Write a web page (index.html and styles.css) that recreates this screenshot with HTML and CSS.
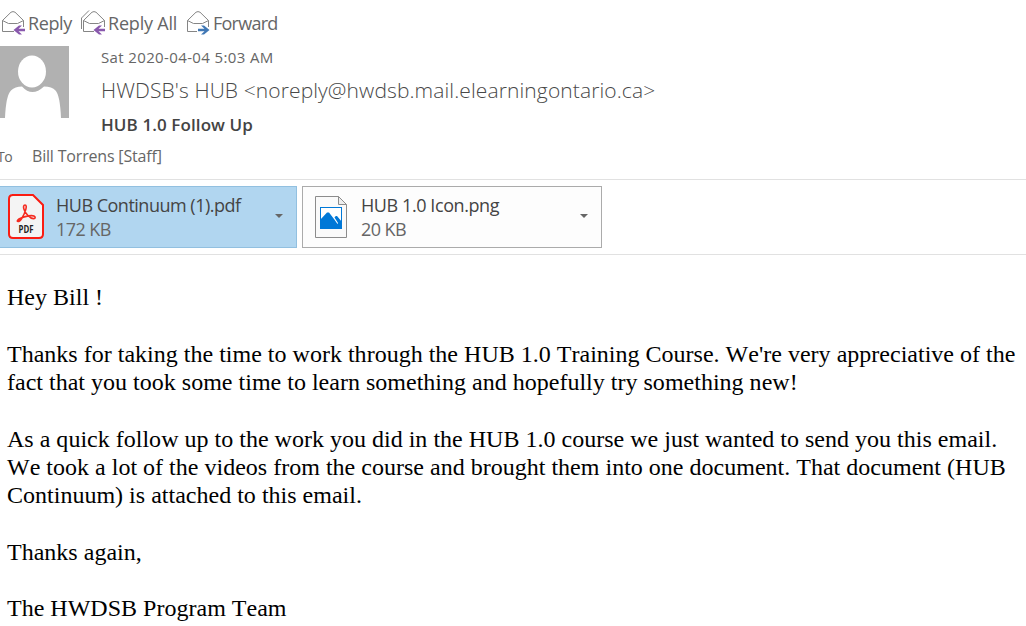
FILE: index.html
```html
<!DOCTYPE html>
<html lang="en">

<head>
    <meta charset="UTF-8">
    <meta name="viewport" content="width=device-width, initial-scale=1.0">
    <title>HUB 1.0 Follow Up</title>
    <link rel="stylesheet" href="styles.css">
</head>

<body>
    <nav class="actions">
        <a class="action reply">
            <svg width="24" height="24" viewBox="0 0 24 24">
                <path class="envelope" d="M12 20.500H.5V9.500L9 1.200Q11 0 13 1.200L21.500 9.500V16M.5 9.500L6.500 12.500H15.500L21.500 9.500" />
                <path class="arrow" d="M11.500 19L17 14.500H20L16.500 17.800H23V20.200H16.500L20 23.500H17Z" />
            </svg>
            <span>Reply</span>
        </a>
        <a class="action reply-all">
            <svg width="26" height="24" viewBox="0 0 26 24">
                <path class="envelope" d="M13 20.500H2.500V9.500L11 1.200Q13 0 15 1.200L23.500 9.500V16M2.500 9.500L8.500 12.500H17.500L23.500 9.500M.5 18V7L8 -.5" />
                <path class="arrow" d="M12.500 19L18 14.500H21L17.500 17.800H24V20.200H17.500L21 23.500H18Z" />
            </svg>
            <span>Reply All</span>
        </a>
        <a class="action forward">
            <svg width="24" height="24" viewBox="0 0 24 24">
                <path class="envelope" d="M10 20.500H.5V9.500L9 1.200Q11 0 13 1.200L21.500 9.500V16M.5 9.500L6.500 12.500H15.500L21.500 9.500" />
                <path class="arrow" d="M22.500 19L17 14.500H14L17.500 17.800H11V20.200H17.500L14 23.500H17Z" />
            </svg>
            <span>Forward</span>
        </a>
    </nav>

    <header class="message-header">
        <svg class="avatar" width="69" height="72" viewBox="0 0 69 72">
            <rect width="69" height="72" fill="#b1b1b1" />
            <path fill="#fff" d="M5 72Q6 49 11 44.500Q15 40.500 22 40.500Q27 46 32.500 46Q38 46 44 40.500Q52 40.500 55.500 44.500Q60 49 61 72Z" />
            <ellipse cx="32" cy="25.500" rx="14" ry="16" fill="#fff" />
        </svg>
        <div class="details">
            <div class="date">Sat 2020-04-04 5:03 AM</div>
            <div class="sender">HWDSB's HUB &lt;noreply@hwdsb.mail.elearningontario.ca&gt;</div>
            <div class="subject">HUB 1.0 Follow Up</div>
        </div>
    </header>

    <div class="recipients">
        <span class="to">To</span>
        <span class="name">Bill Torrens [Staff]</span>
    </div>

    <section class="attachments">
        <div class="attachment selected">
            <svg class="file-icon" width="36" height="46" viewBox="0 0 36 46">
                <path fill="#f4f4f4" stroke="#fa1c12" stroke-width="2" d="M4 1H25L35 11V40Q35 44 31 44H5Q1 44 1 40V5Q1 1 5 1Z" />
                <path fill="none" stroke="#f52b20" stroke-width="1.600" d="M17 11C14 11 16 18 20 21.500C24 26 28 25 27 22.800C26 20.500 16 22 11 25C7 28 11 29 14 24C17 19 20 11 17 11Z" />
                <text class="icon-label" x="18" y="39" textLength="15" lengthAdjust="spacingAndGlyphs">PDF</text>
            </svg>
            <div class="file">
                <div class="file-name pdf-name">HUB Continuum (1).pdf</div>
                <div class="file-size">172 KB</div>
            </div>
            <span class="caret"></span>
        </div>
        <div class="attachment">
            <svg class="file-icon" width="32" height="42" viewBox="0 0 32 42">
                <path fill="#fafafa" stroke="#8c8c8c" d="M.5 .5H23.500L31.500 8.500V41.500H.5Z" />
                <path fill="#ededed" stroke="#8c8c8c" d="M23.500 .5V8.500H31.500Z" />
                <rect x="5.500" y="11.500" width="21" height="21" fill="#fff" stroke="#0078d7" />
                <path fill="#0078d7" d="M5 24L12 16.500H14L19 23L22.500 28L23 27L19.500 21.500Q20 19.500 22 20L27 26V33H5Z" />
            </svg>
            <div class="file">
                <div class="file-name png-name">HUB 1.0 Icon.png</div>
                <div class="file-size">20 KB</div>
            </div>
            <span class="caret"></span>
        </div>
    </section>

    <main class="message">
        <p>Hey Bill !</p>
        <p>Thanks for taking the time to work through the HUB 1.0 Training Course. We're very appreciative of the<br>
            fact that you took some time to learn something and hopefully try something new!</p>
        <p>As a quick follow up to the work you did in the HUB 1.0 course we just wanted to send you this email.<br>
            We took a lot of the videos from the course and brought them into one document. That document (HUB<br>
            Continuum) is attached to this email.</p>
        <p>Thanks again,</p>
        <p>The HWDSB Program Team</p>
    </main>
</body>

</html>
```
FILE: styles.css
```css
body {
    margin: 0;
    height: 626px;
    overflow: hidden;
    background-color: #fff;
    color: #666;
    font-family: 'Open Sans', 'Noto Sans', sans-serif;
    white-space: nowrap;
}

.actions {
    display: flex;
    height: 46px;
    padding-left: 2px;
    box-sizing: border-box;
    font-size: 18px;
    line-height: 24px;
}

.action {
    display: flex;
    padding-top: 11px;
}

.action svg {
    overflow: visible;
}

.action span {
    margin-left: 2px;
    letter-spacing: -0.4px;
}

.reply {
    width: 79px;
}

.reply-all {
    width: 106px;
}

.reply-all span {
    margin-left: 1px;
    letter-spacing: -0.2px;
}

.forward span {
    letter-spacing: -0.75px;
}

.envelope {
    fill: none;
    stroke: #858585;
}

.arrow {
    fill: #8958ad;
}

.forward .arrow {
    fill: #4078b5;
}

.message-header {
    display: flex;
    height: 96px;
}

.details {
    margin-left: 32px;
}

.date {
    margin-top: -1px;
    font-size: 15px;
    line-height: 24px;
    letter-spacing: 0.37px;
}

.sender {
    margin-top: 6px;
    color: #484848;
    font-size: 21px;
    font-weight: 300;
    line-height: 30px;
    letter-spacing: 0.11px;
}

.subject {
    margin-top: 8px;
    color: #444;
    font-size: 17px;
    font-weight: 600;
    line-height: 24px;
    letter-spacing: 0.1px;
}

.recipients {
    display: flex;
    align-items: baseline;
    height: 37px;
    line-height: 28px;
}

.to {
    width: 35px;
    margin-left: -3px;
    font-size: 14px;
    letter-spacing: -0.5px;
}

.name {
    font-size: 16px;
    letter-spacing: -0.18px;
}

.attachments {
    display: flex;
    gap: 5px;
    height: 76px;
    padding-top: 6px;
    box-sizing: border-box;
    border-top: 1px solid #e1e1e1;
    border-bottom: 1px solid #e1e1e1;
}

.attachment {
    display: flex;
    align-items: center;
    width: 300px;
    height: 62px;
    padding: 0 13px 0 12px;
    box-sizing: border-box;
    border: 1px solid #ababab;
    background-color: #fdfdfd;
}

.attachment.selected {
    width: 297px;
    padding-left: 8px;
    border-color: #92c0e0;
    border-left: 0;
    background-color: #b1d6f0;
}

.file {
    flex: 1;
    margin-left: 14px;
    font-size: 18px;
    line-height: 24px;
}

.selected .file {
    margin-left: 12px;
}

.file-name {
    color: #444;
    letter-spacing: -0.5px;
}

.png-name {
    letter-spacing: -0.42px;
}

.file-size {
    letter-spacing: -0.55px;
}

.icon-label {
    fill: #222;
    font-size: 10px;
    font-weight: 700;
    text-anchor: middle;
}

.caret {
    margin-top: -2px;
    border: 4px solid transparent;
    border-top-color: #666;
    border-bottom: 0;
}

.message {
    padding: 28.400px 0 0 7px;
    color: #000;
    font-family: 'Liberation Serif', 'Times New Roman', serif;
    font-size: 24px;
    font-kerning: none;
    line-height: 28.270px;
    letter-spacing: 0.01px;
}

.message p {
    margin: 0 0 28.270px;
}
```
